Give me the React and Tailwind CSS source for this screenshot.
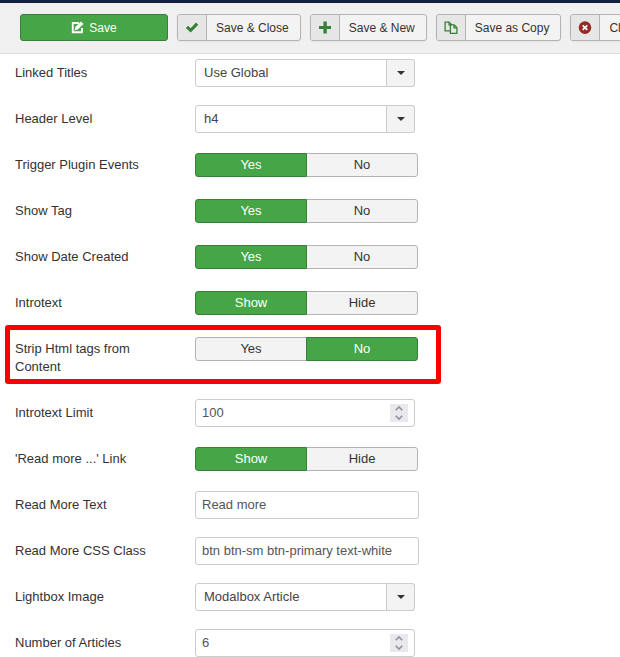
import React, { useId, useRef } from "react";

function EditIcon() {
  return (
    <svg viewBox="0 0 14 14" className="h-[13px] w-[13px]" aria-hidden="true">
      <path
        d="M8.6 2.2H1.9v9.9h9.9V7.6"
        fill="none"
        stroke="#fff"
        strokeWidth="2"
      />
      <path d="M10.8 0.5l2.7 2.6-6.2 6.1-3.5.9.9-3.6z" fill="#fff" />
    </svg>
  );
}

function CheckIcon() {
  return (
    <svg viewBox="0 0 14 14" className="h-[14px] w-[14px]" aria-hidden="true">
      <path d="M0.8 6.9l2.3-2.2 2.6 2.6L11 1.6l2.3 2.1-7.6 7.8z" fill="#378137" />
    </svg>
  );
}

function PlusIcon() {
  return (
    <svg viewBox="0 0 14 14" className="h-[14px] w-[14px]" aria-hidden="true">
      <path
        d="M5.4 0.6h3.4v4.3H13v3.2H8.8v4.4H5.4V8.1H1V4.9h4.4z"
        fill="#378137"
      />
    </svg>
  );
}

function CopyIcon() {
  return (
    <svg
      viewBox="0 0 14 14"
      className="h-[14px] w-[14px]"
      stroke="#378137"
      strokeWidth="1.3"
      aria-hidden="true"
    >
      <path d="M1.1 1.1h4l2.6 2.6v6.1H1.1z" fill="none" />
      <path d="M5 1.1v2.8h2.7" fill="none" />
      <path d="M6.4 3.9h3.8l2.7 2.7v5.8H6.4z" fill="#e6e6e6" />
      <path d="M10 3.9v2.9h2.9" fill="none" />
    </svg>
  );
}

function CancelIcon() {
  return (
    <svg viewBox="0 0 14 14" className="h-[14px] w-[14px]" aria-hidden="true">
      <circle cx="7" cy="6.6" r="6.3" fill="#942a25" />
      <path
        d="M4.7 4.3l4.6 4.6M9.3 4.3L4.7 8.9"
        stroke="#fff"
        strokeWidth="1.7"
      />
    </svg>
  );
}

function ToolbarButton({ icon, children }) {
  return (
    <button
      type="button"
      className="flex h-[27px] shrink-0 overflow-hidden rounded-[3px] border border-[#b3b3b3] bg-[#f3f3f3] text-xs leading-[26px] text-[#333] shadow-xs"
    >
      <span className="flex h-full w-[29px] items-center justify-center border-r border-[#b3b3b3] bg-[#e6e6e6]">
        {icon}
      </span>
      <span className="pr-[11px] pl-[9px]">{children}</span>
    </button>
  );
}

function Row({ label, htmlFor, labelId, highlight, children }) {
  return (
    <div className="relative flex items-start">
      {highlight && (
        <div className="pointer-events-none absolute -top-[10px] -bottom-[3px] -left-[10px] w-[436px] rounded-[3px] border-[5px] border-[#fb0000]" />
      )}
      <label
        id={labelId}
        htmlFor={htmlFor}
        className="w-[180px] shrink-0 py-[5px] pr-5 leading-[18px]"
      >
        {label}
      </label>
      {children}
    </div>
  );
}

function SelectField({ label, value }) {
  const id = useId();
  return (
    <Row label={label} htmlFor={id}>
      <div className="relative w-[220px]">
        <select
          id={id}
          defaultValue={value}
          className="block h-7 w-full appearance-none rounded-[3px] border border-[#ccc] bg-white pr-8 pl-2 text-[#444]"
        >
          <option>{value}</option>
        </select>
        <span className="pointer-events-none absolute inset-y-0 right-0 flex w-[29px] items-center justify-center rounded-r-[3px] border border-[#ccc] bg-[#f3f3f3]">
          <svg viewBox="0 0 8 4" className="h-1 w-2" aria-hidden="true">
            <path d="M0 0h8L4 4z" fill="#333" />
          </svg>
        </span>
      </div>
    </Row>
  );
}

function ToggleField({ label, options = ["Yes", "No"], value, highlight }) {
  const id = useId();
  return (
    <Row label={label} labelId={id} highlight={highlight}>
      <div
        role="radiogroup"
        aria-labelledby={id}
        className="flex w-[223px] py-[2px] text-center leading-[22px]"
      >
        {options.map((option) => (
          <label
            key={option}
            className="relative h-6 flex-1 border border-[#b3b3b3] bg-[#f3f3f3] text-[#333] first:rounded-l-[3px] last:-ml-px last:rounded-r-[3px] has-checked:z-10 has-checked:border-[#378137] has-checked:bg-[#46a546] has-checked:text-white"
          >
            <input
              type="radio"
              name={id}
              defaultChecked={option === value}
              className="sr-only"
            />
            {option}
          </label>
        ))}
      </div>
    </Row>
  );
}

function TextField({ label, value }) {
  const id = useId();
  return (
    <Row label={label} htmlFor={id}>
      <input
        id={id}
        type="text"
        defaultValue={value}
        className="h-7 w-[224px] rounded-[3px] border border-[#ccc] bg-white px-[6px] pb-[2px] text-[#555]"
      />
    </Row>
  );
}

function NumberField({ label, value }) {
  const id = useId();
  const input = useRef(null);
  return (
    <Row label={label} htmlFor={id}>
      <div className="relative w-[220px]">
        <input
          ref={input}
          id={id}
          type="number"
          defaultValue={value}
          className="block h-7 w-full [appearance:textfield] rounded-[3px] border border-[#ccc] bg-white px-[6px] pb-[2px] text-[#555] [&::-webkit-inner-spin-button]:appearance-none"
        />
        <div className="absolute top-[5px] right-[7px] flex h-[18px] w-[18px] flex-col bg-[#e9e9ed]">
          <button
            type="button"
            aria-label="Increase"
            onClick={() => input.current.stepUp()}
            className="flex h-[9px] items-center justify-center"
          >
            <svg viewBox="0 0 8 5" className="h-[5px] w-2" aria-hidden="true">
              <path d="M.7 4.3L4 1l3.3 3.3" fill="none" stroke="#8f8f9d" strokeWidth="1.6" />
            </svg>
          </button>
          <button
            type="button"
            aria-label="Decrease"
            onClick={() => input.current.stepDown()}
            className="flex h-[9px] items-center justify-center"
          >
            <svg viewBox="0 0 8 5" className="h-[5px] w-2" aria-hidden="true">
              <path d="M.7.7L4 4 7.3.7" fill="none" stroke="#8f8f9d" strokeWidth="1.6" />
            </svg>
          </button>
        </div>
      </div>
    </Row>
  );
}

function App() {
  return (
    <div className="overflow-hidden bg-white font-['Liberation_Sans',Arial,sans-serif] text-[13px] text-[#333]">
      {/* Toolbar */}
      <header className="flex gap-[9px] border-t-3 border-b border-t-[#13213f] border-b-[#ddd] bg-[#f0f0f0] pt-[11px] pb-3 pl-5">
        <button
          type="button"
          className="flex h-[27px] w-[148px] shrink-0 items-center justify-center gap-[5px] rounded-[3px] border border-[#378137] bg-[#46a546] text-xs text-white"
        >
          <EditIcon />
          Save
        </button>
        <ToolbarButton icon={<CheckIcon />}>Save &amp; Close</ToolbarButton>
        <ToolbarButton icon={<PlusIcon />}>Save &amp; New</ToolbarButton>
        <ToolbarButton icon={<CopyIcon />}>Save as Copy</ToolbarButton>
        <ToolbarButton icon={<CancelIcon />}>Close</ToolbarButton>
      </header>

      {/* Module options */}
      <form className="flex flex-col gap-[18px] pt-[5px] pl-[15px]">
        <SelectField label="Linked Titles" value="Use Global" />
        <SelectField label="Header Level" value="h4" />
        <ToggleField label="Trigger Plugin Events" value="Yes" />
        <ToggleField label="Show Tag" value="Yes" />
        <ToggleField label="Show Date Created" value="Yes" />
        <ToggleField label="Introtext" options={["Show", "Hide"]} value="Show" />
        <ToggleField label="Strip Html tags from Content" value="No" highlight />
        <NumberField label="Introtext Limit" value={100} />
        <ToggleField
          label="'Read more ...' Link"
          options={["Show", "Hide"]}
          value="Show"
        />
        <TextField label="Read More Text" value="Read more" />
        <TextField
          label="Read More CSS Class"
          value="btn btn-sm btn-primary text-white"
        />
        <SelectField label="Lightbox Image" value="Modalbox Article" />
        <NumberField label="Number of Articles" value={6} />
      </form>
    </div>
  );
}

export default App;
